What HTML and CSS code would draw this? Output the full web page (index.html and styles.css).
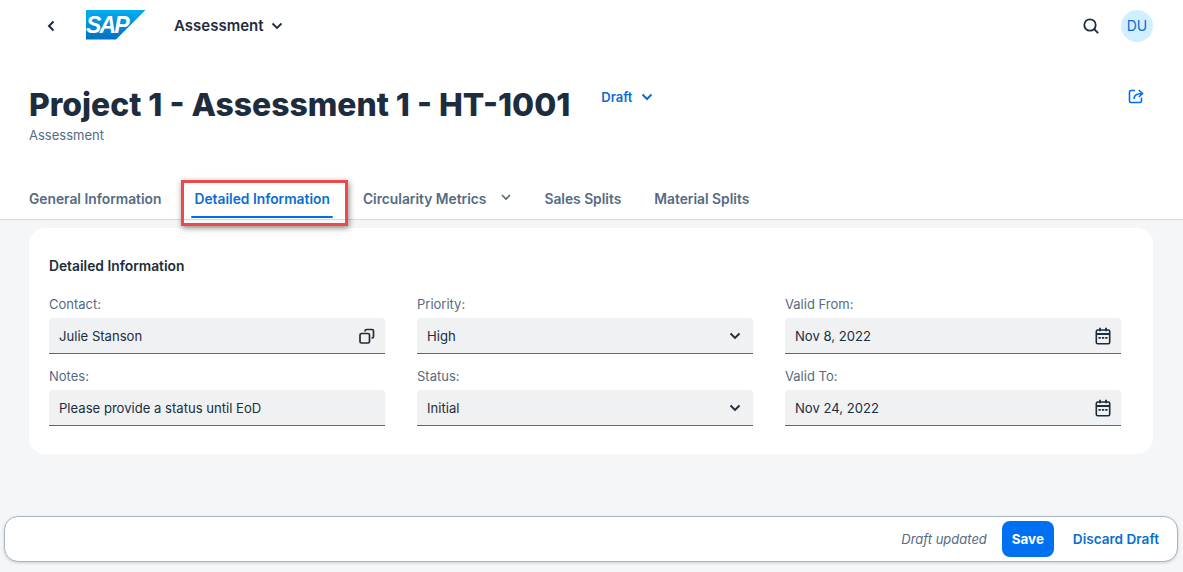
FILE: index.html
```html
<!DOCTYPE html>
<html lang="en">
<head>
<meta charset="utf-8">
<title>Assessment</title>
<link rel="stylesheet" href="styles.css">
</head>
<body>
<div class="page">
  <header class="top">
    <div class="shell">
      <svg class="ico-back" width="10" height="14" viewBox="0 0 10 14"><path d="M7.500 2.500 3 7l4.500 4.500" fill="none" stroke="#1d2d3e" stroke-width="2"/></svg>
      <svg class="logo" width="60" height="30" viewBox="0 0 60 30">
        <defs><linearGradient id="sapg" x1="0" y1="0" x2="0" y2="1"><stop offset="0" stop-color="#00aeef"/><stop offset="1" stop-color="#0070c0"/></linearGradient></defs>
        <path d="M0 0h59.500L30 29.500H0z" fill="url(#sapg)"/>
        <text x="0" y="22.500" class="logo-text">SAP</text>
      </svg>
      <span class="app">Assessment</span>
      <svg class="ico-app" width="12" height="8" viewBox="0 0 12 8"><path d="M1.500 1.500 6 6l4.500-4.500" fill="none" stroke="#1d2d3e" stroke-width="1.800"/></svg>
      <svg class="ico-search" width="18" height="18" viewBox="0 0 18 18"><circle cx="8" cy="8" r="5.700" fill="none" stroke="#1d2d3e" stroke-width="1.800"/><path d="m12 12 4.200 4.200" stroke="#1d2d3e" stroke-width="1.800"/></svg>
      <div class="avatar">DU</div>
    </div>
    <div class="title-row">
      <div>
        <h1 class="title">Project 1 - Assessment 1 - HT-1001</h1>
        <div class="subtitle">Assessment</div>
      </div>
      <span class="status">Draft</span>
      <svg class="ico-status" width="12" height="8" viewBox="0 0 12 8"><path d="M1.500 1.500 6 6l4.500-4.500" fill="none" stroke="#0a6ed1" stroke-width="2"/></svg>
      <svg class="ico-share" width="16" height="16" viewBox="0 0 16 16"><path d="M7 2.500H3A1.500 1.500 0 0 0 1.500 4v9A1.500 1.500 0 0 0 3 14.500h9a1.500 1.500 0 0 0 1.500-1.500V9.500" fill="none" stroke="#0070f2" stroke-width="1.600"/><path d="M6 11c0-3.500 2-5.500 8-5.500M10.800 2l3.700 3.500-3.700 3.500" fill="none" stroke="#0070f2" stroke-width="1.600"/></svg>
    </div>
    <nav class="tabs">
      <span class="tab">General Information</span>
      <span class="tab active">Detailed Information</span>
      <span class="tab tab-menu">Circularity Metrics<svg class="ico-tab" width="10" height="7" viewBox="0 0 10 7"><path d="M1 1l4 4 4-4" fill="none" stroke="#556b82" stroke-width="1.700"/></svg></span>
      <span class="tab">Sales Splits</span>
      <span class="tab">Material Splits</span>
      <div class="callout"></div>
    </nav>
  </header>

  <main class="content">
    <section class="card">
      <h2 class="card-title">Detailed Information</h2>
      <div class="form">
        <div class="field">
          <label class="label">Contact:</label>
          <div class="input"><span>Julie Stanson</span>
            <svg width="16" height="16" viewBox="0 0 16 16"><rect x="1" y="5.500" width="9.500" height="9.500" rx="1.500" fill="none" stroke="#1d2d3e" stroke-width="1.700"/><path d="M6 3.500V3a1.500 1.500 0 0 1 1.500-1.500H13A1.500 1.500 0 0 1 14.500 3v5.500A1.500 1.500 0 0 1 13 10h-.5" fill="none" stroke="#1d2d3e" stroke-width="1.700"/></svg>
          </div>
        </div>
        <div class="field">
          <label class="label">Priority:</label>
          <div class="input"><span>High</span>
            <svg class="chev" width="12" height="8" viewBox="0 0 12 8"><path d="M1.500 1.500 6 6l4.500-4.500" fill="none" stroke="#1d2d3e" stroke-width="1.900"/></svg>
          </div>
        </div>
        <div class="field">
          <label class="label">Valid From:</label>
          <div class="input"><span>Nov 8, 2022</span>
            <svg width="16" height="18" viewBox="0 0 16 18"><rect x="1.300" y="3" width="13.400" height="13.800" rx="1.500" fill="none" stroke="#1d2d3e" stroke-width="1.600"/><path d="M1.500 7h13M5 .8v3.500M11 .8v3.500" stroke="#1d2d3e" stroke-width="1.800"/><path d="M3.500 10.800h2.300M6.900 10.800h2.300M10.200 10.800h2.300" stroke="#1d2d3e" stroke-width="1.800"/></svg>
          </div>
        </div>
        <div class="field">
          <label class="label">Notes:</label>
          <div class="input"><span>Please provide a status until EoD</span></div>
        </div>
        <div class="field">
          <label class="label">Status:</label>
          <div class="input"><span>Initial</span>
            <svg class="chev" width="12" height="8" viewBox="0 0 12 8"><path d="M1.500 1.500 6 6l4.500-4.500" fill="none" stroke="#1d2d3e" stroke-width="1.900"/></svg>
          </div>
        </div>
        <div class="field">
          <label class="label">Valid To:</label>
          <div class="input"><span>Nov 24, 2022</span>
            <svg width="16" height="18" viewBox="0 0 16 18"><rect x="1.300" y="3" width="13.400" height="13.800" rx="1.500" fill="none" stroke="#1d2d3e" stroke-width="1.600"/><path d="M1.500 7h13M5 .8v3.500M11 .8v3.500" stroke="#1d2d3e" stroke-width="1.800"/><path d="M3.500 10.800h2.300M6.900 10.800h2.300M10.200 10.800h2.300" stroke="#1d2d3e" stroke-width="1.800"/></svg>
          </div>
        </div>
      </div>
    </section>
  </main>

  <footer class="footer">
    <em class="updated">Draft updated</em>
    <button class="save">Save</button>
    <button class="discard">Discard Draft</button>
  </footer>
</div>
</body>
</html>
```
FILE: styles.css
```css
* { box-sizing: border-box; }
html, body { margin: 0; height: 100%; }
body { font-family: "Inter", "Noto Sans", sans-serif; color: #1d2d3e; background: #f5f6f7; overflow: hidden; }
.page { height: 572px; display: flex; flex-direction: column; }

.top { background: #fff; border-bottom: 1px solid #d5dadd; height: 220px; padding: 0 30px 0 29px; display: flex; flex-direction: column; }
.shell { height: 52px; display: flex; align-items: center; }
.ico-back { margin-left: 17px; }
.logo { margin-left: 30px; margin-top: -1px; }
.logo-text { font-family: "Liberation Sans", sans-serif; font-weight: 700; font-style: italic; font-size: 23px; fill: #fff; letter-spacing: -1.800px; }
.app { margin-left: 28px; font-size: 15px; font-weight: 600; }
.ico-app { margin-left: 8px; }
.ico-search { margin-left: auto; }
.avatar { margin-left: 21px; width: 32px; height: 32px; border-radius: 50%; background: #d1efff; color: #0a6ed1; font-size: 14px; display: flex; align-items: center; justify-content: center; }

.title-row { display: flex; align-items: flex-start; margin-top: 34px; height: 62px; }
.title { margin: 1px 0 0; font-size: 31.900px; line-height: 36px; font-weight: 800; white-space: nowrap; }
.subtitle { font-size: 13px; line-height: 16px; color: #556b82; margin-top: 4px; }
.status { margin-left: 31px; margin-top: 3px; font-size: 13px; line-height: 16px; font-weight: 600; color: #0a6ed1; }
.ico-status { margin-left: 8.500px; margin-top: 7px; }
.ico-share { margin-left: auto; margin-top: 2px; margin-right: 9px; }

.tabs { position: relative; display: flex; margin-top: 29px; height: 43px; }
.tab { font-size: 13.800px; font-weight: 600; line-height: 16px; color: #556b82; padding-top: 15px; margin-right: 33px; white-space: nowrap; }
.tab.active { color: #0a6ed1; }
.tab-menu { display: flex; }
.ico-tab { margin: 3px 0 0 15px; }
.callout { position: absolute; left: 152px; top: 4px; width: 167px; height: 46px; border: 3px solid #f04848; box-shadow: 1px 2px 6px rgba(0,0,0,.45); }
.tab.active::after { content: ""; position: absolute; left: 162px; width: 142px; top: 40px; height: 2px; background: #0070f2; border-radius: 1px; }

.content { padding: 8px 30px 0 29px; flex: 1; }
.card { background: #fff; border-radius: 16px; height: 226px; padding: 30px 32px 0 20px; }
.card-title { margin: 0; font-size: 13.800px; line-height: 16px; font-weight: 600; }
.form { display: grid; grid-template-columns: repeat(3, 336px); column-gap: 32px; row-gap: 14px; margin-top: 22px; }
.label { display: block; font-size: 13px; line-height: 16px; color: #556b82; margin-bottom: 6px; }
.input { height: 36px; background: #eff1f2; border-bottom: 1px solid #556b82; border-radius: 4px 4px 0 0; padding: 0 10px; display: flex; align-items: center; justify-content: space-between; font-size: 13.100px; }
.input svg { flex: none; }
.input svg.chev { margin-right: 2px; }

.footer { position: relative; margin: 0 5px 10px 4px; height: 46px; background: #fff; border: 1px solid #a9b4be; border-radius: 14px; box-shadow: 0 1px 3px rgba(85,107,130,.25); display: flex; align-items: center; justify-content: flex-end; padding-right: 18px; }
.updated { font-size: 13px; color: #556b82; margin-right: 15px; }
.save { width: 52px; height: 36px; border: 0; border-radius: 8px; background: #0070f2; color: #fff; font: 700 13.400px "Inter", sans-serif; padding: 0; }
.discard { border: 0; background: none; color: #0a6ed1; font: 600 13.600px "Inter", sans-serif; padding: 0; margin-left: 19px; }
```
